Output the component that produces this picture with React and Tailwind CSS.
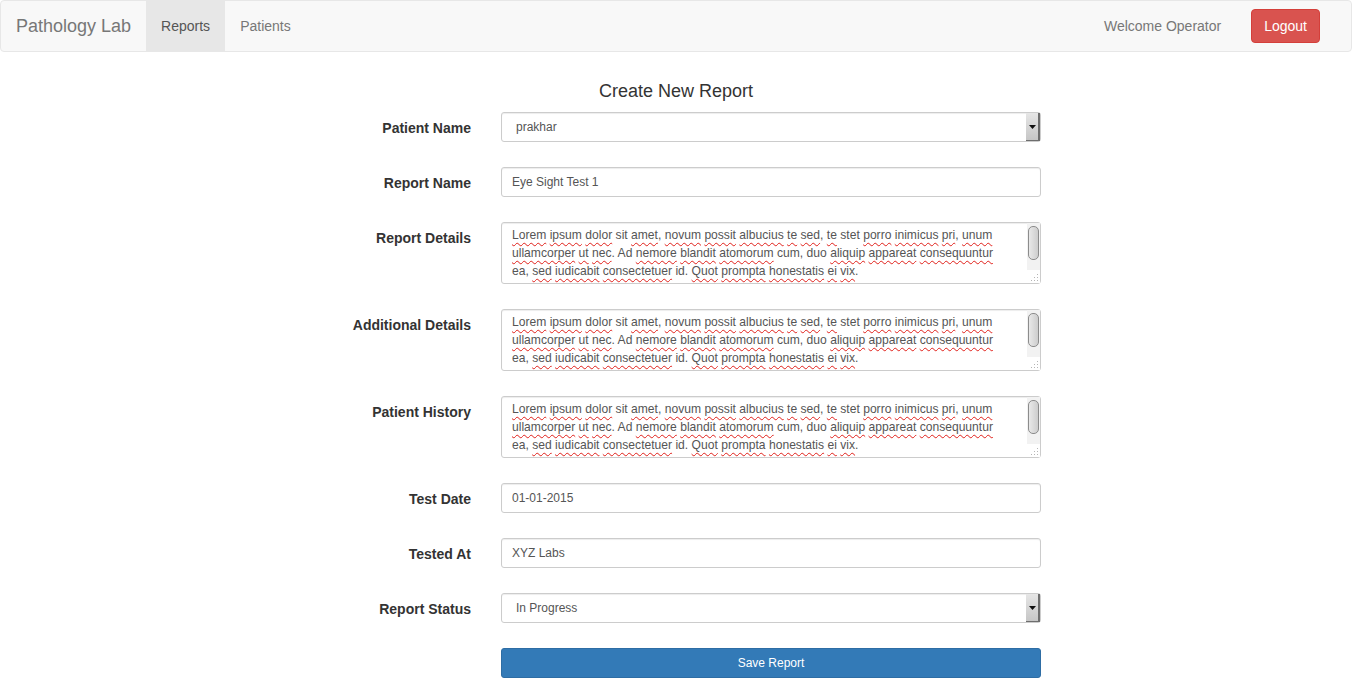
import React from 'react'

const LOREM = [
  'Lorem ipsum dolor sit amet, novum possit albucius te sed, te stet porro inimicus pri, unum',
  'ullamcorper ut nec. Ad nemore blandit atomorum cum, duo aliquip appareat consequuntur',
  'ea, sed iudicabit consectetuer id. Quot prompta honestatis ei vix.',
]

const MISSPELT = new Set([
  'Lorem', 'ipsum', 'dolor', 'amet', 'novum', 'possit', 'albucius', 'te', 'sed', 'porro',
  'inimicus', 'pri', 'unum', 'ullamcorper', 'ut', 'nec', 'nemore', 'blandit', 'atomorum',
  'aliquip', 'appareat', 'consequuntur', 'iudicabit', 'consectetuer', 'Quot', 'prompta',
  'honestatis', 'ei', 'vix',
])

function SpellLine({ text }) {
  return (
    <div className="whitespace-pre">
      {text.split(/(\s+)/).map((tok, i) => {
        const word = tok.replace(/[.,]/g, '')
        const rest = tok.slice(word.length)
        if (!MISSPELT.has(word)) return <span key={i}>{tok}</span>
        return (
          <span key={i}>
            <span className="underline decoration-wavy decoration-[#e0201a] decoration-1 underline-offset-[3px]">{word}</span>
            {rest}
          </span>
        )
      })}
    </div>
  )
}

function Label({ children }) {
  return (
    <div className="w-[501px] shrink-0 pr-[30px] pt-[6px] text-right text-[14px] font-bold leading-5 text-[#333]">
      {children}
    </div>
  )
}

function TextInput({ value }) {
  return (
    <div className="flex h-[30px] w-[540px] items-center rounded-[3px] border border-[#ccc] bg-white px-[10px] text-[12px] text-[#555] shadow-[inset_0_1px_1px_rgba(0,0,0,0.075)]">
      {value}
    </div>
  )
}

function SelectBox({ value }) {
  return (
    <div className="flex h-[30px] w-[540px] items-center rounded-[3px] border border-[#ccc] bg-white pl-[14px] text-[12px] text-[#555] shadow-[inset_0_1px_1px_rgba(0,0,0,0.075)]">
      <span className="flex-1">{value}</span>
      <span className="flex h-[28px] w-[14px] items-center justify-center border-r-2 border-b border-[#6e6e6e] bg-linear-to-b from-[#e6e6e6] to-[#c6c6c6]">
        <svg width="7" height="4" viewBox="0 0 7 4">
          <path d="M0 0h7L3.5 4z" fill="#111" />
        </svg>
      </span>
    </div>
  )
}

function TextArea() {
  return (
    <div className="flex h-[62px] w-[540px] rounded-[3px] border border-[#ccc] bg-white text-[12.1px] leading-[18px] text-[#555] shadow-[inset_0_1px_1px_rgba(0,0,0,0.075)]">
      <div className="flex-1 overflow-hidden pl-[10px] pt-[3px]">
        {LOREM.map((l, i) => <SpellLine key={i} text={l} />)}
      </div>
      <div className="flex w-[13px] flex-col bg-[#f2f2f2]">
        <div className="flex-1 px-[1px] pt-[3px] pb-[1px]">
          <div className="h-[34px] rounded-[5px] border border-[#8c8c8c] bg-linear-to-r from-[#e9e9e9] to-[#cdcdcd]" />
        </div>
        <div className="flex h-[13px] items-end justify-end bg-white pb-[1px] pr-[1px]">
          <svg width="8" height="8" viewBox="0 0 8 8">
            <g fill="#b5b5b5">
              <rect x="6" y="0" width="1" height="1" />
              <rect x="3" y="3" width="1" height="1" />
              <rect x="6" y="3" width="1" height="1" />
              <rect x="0" y="6" width="1" height="1" />
              <rect x="3" y="6" width="1" height="1" />
              <rect x="6" y="6" width="1" height="1" />
            </g>
          </svg>
        </div>
      </div>
    </div>
  )
}

const ROWS = [
  { label: 'Patient Name', el: <SelectBox value="prakhar" /> },
  { label: 'Report Name', el: <TextInput value="Eye Sight Test 1" /> },
  { label: 'Report Details', el: <TextArea /> },
  { label: 'Additional Details', el: <TextArea /> },
  { label: 'Patient History', el: <TextArea /> },
  { label: 'Test Date', el: <TextInput value="01-01-2015" /> },
  { label: 'Tested At', el: <TextInput value="XYZ Labs" /> },
  { label: 'Report Status', el: <SelectBox value="In Progress" /> },
]

export default function App() {
  return (
    <div className="min-h-screen bg-white font-['Liberation_Sans',Arial,sans-serif] text-[14px] text-[#333]">
      {/* Navbar */}
      <nav className="flex h-[52px] items-stretch rounded-[4px] border border-[#e7e7e7] bg-[#f8f8f8]">
        <span className="flex items-center px-[15px] text-[18px] text-[#777]">Pathology Lab</span>
        <span className="flex items-center bg-[#e7e7e7] px-[15px] text-[#555]">Reports</span>
        <span className="flex items-center px-[15px] text-[#777]">Patients</span>
        <div className="ml-auto flex items-center gap-[30px] pr-[31px]">
          <span className="text-[#777]">Welcome Operator</span>
          <button className="h-[34px] rounded-[4px] border border-[#d43f3a] bg-[#d9534f] px-[12px] text-[14px] text-white">
            Logout
          </button>
        </div>
      </nav>

      {/* Form */}
      <main className="pt-[29px]">
        <h4 className="mb-[11px] text-center text-[18px] leading-5 text-[#333]">Create New Report</h4>
        <div className="flex flex-col gap-[25px]">
          {ROWS.map(({ label, el }) => (
            <div key={label} className="flex">
              <Label>{label}</Label>
              {el}
            </div>
          ))}
          <div className="flex pl-[501px]">
            <button className="h-[30px] w-[540px] rounded-[3px] border border-[#2e6da4] bg-[#337ab7] text-[12px] text-white">
              Save Report
            </button>
          </div>
        </div>
      </main>
    </div>
  )
}
